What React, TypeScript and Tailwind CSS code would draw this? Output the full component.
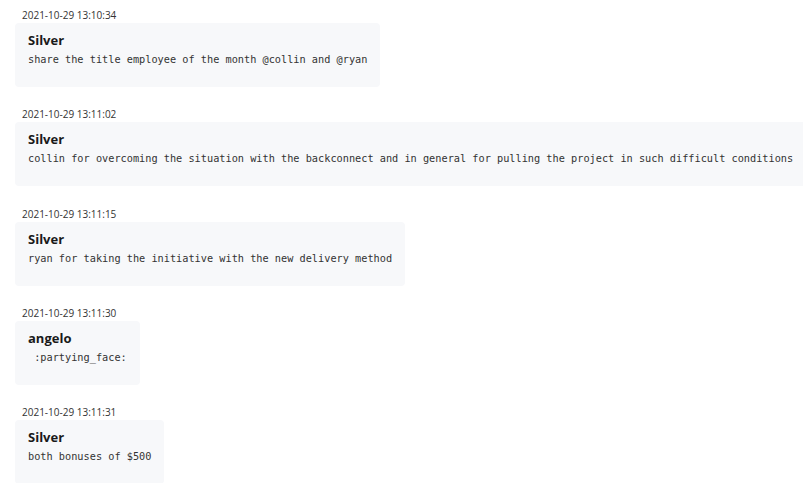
import React from "react";

type Message = {
  time: string;
  author: string;
  text: string;
};

const messages: Message[] = [
  { time: "2021-10-29 13:10:34", author: "Silver", text: "share the title employee of the month @collin and @ryan" },
  {
    time: "2021-10-29 13:11:02",
    author: "Silver",
    text: "collin for overcoming the situation with the backconnect and in general for pulling the project in such difficult conditions",
  },
  { time: "2021-10-29 13:11:15", author: "Silver", text: "ryan for taking the initiative with the new delivery method" },
  { time: "2021-10-29 13:11:30", author: "angelo", text: " :partying_face:" },
  { time: "2021-10-29 13:11:31", author: "Silver", text: "both bonuses of $500" },
];

const App: React.FC = () => {
  return (
    <div className="min-h-screen bg-white pt-[8px] pl-[15px] overflow-hidden">
      {messages.map((msg, i) => (
        <div key={i} className="mb-[20.25px]">
          <div className="pl-[7px] text-[10px] leading-[14px] text-[#333] font-['Open_Sans',sans-serif]">
            {msg.time}
          </div>
          <div className="mt-[1px] w-fit bg-[#f7f8fa] rounded-[4px] pl-[13px] pr-[13px] pt-[8px] pb-[21px]">
            <div className="text-[13px] leading-[18px] font-bold text-[#1a1a1a] font-['Open_Sans',sans-serif]">
              {msg.author}
            </div>
            <pre className="mt-[3px] text-[10.25px] leading-[14px] text-[#333] font-['DejaVu_Sans_Mono',monospace] whitespace-pre">
              {msg.text}
            </pre>
          </div>
        </div>
      ))}
    </div>
  );
};

export default App;
